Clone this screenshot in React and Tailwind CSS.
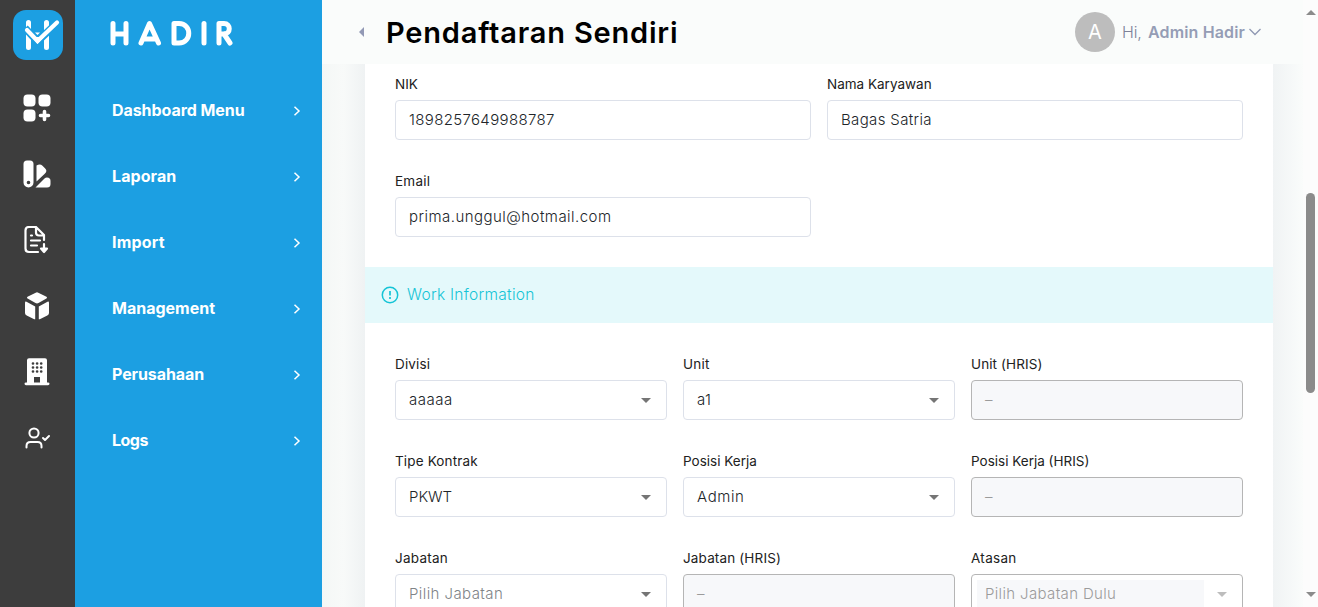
const menu = [
  ["Dashboard Menu", "tracking-[-0.06px]"],
  ["Laporan", "tracking-[0.08px]"],
  ["Import", "tracking-[0.2px]"],
  ["Management", "tracking-[0px]"],
  ["Perusahaan", "tracking-[-0.1px]"],
  ["Logs", "tracking-[-0.5px]"],
];

function Logo() {
  return (
    <svg width="50" height="50" viewBox="0 0 50 50">
      <rect width="50" height="50" rx="13" fill="#1c9fe2" />
      <path d="M15.500 12.500V37.500M33.500 12.500V37.500" fill="none" stroke="#fff" strokeWidth="5" strokeLinecap="round" />
      <path d="M13 26L18 31V34H13ZM36 26L31 31V34H36Z" fill="#fff" />
      <path d="M12 18L24.500 31.500L45 12" fill="none" stroke="#1c9fe2" strokeWidth="7.500" />
      <path d="M22 22.500H27L24.500 25Z" fill="#fff" />
      <path d="M14 20L24.500 31L44 12.500" fill="none" stroke="#fff" strokeWidth="4.200" strokeLinecap="round" />
      <path d="M19 27L24.500 34L31 27Z" fill="#fff" />
    </svg>
  );
}

function Wordmark() {
  return (
    <svg width="124" height="28" viewBox="0 0 124 28" fill="none" stroke="#fff" strokeWidth="5" strokeLinecap="round" strokeLinejoin="round">
      <path d="M3 3.500V23M16 3.500V23M3 14H16" />
      <path d="M31 23L39.500 3.500L48.500 23M35 19H45" />
      <path d="M64 3.500V23H69C82 23 82 3.500 69 3.500Z" />
      <path d="M94 3.500V23" />
      <path d="M109 23V3.500H114C121 3.500 121 14 114 14H110M114 14L120 23" />
    </svg>
  );
}

const icons = [
  <svg width="28" height="28" viewBox="0 0 28 28" fill="#fff">
    <rect x="0.500" y="0.500" width="12" height="12" rx="4" />
    <rect x="15.500" y="0.500" width="12" height="12" rx="4" />
    <rect x="0.500" y="15.500" width="12" height="12" rx="4" />
    <path d="M21.500 17.500V25.500M17.500 21.500H25.500" stroke="#fff" strokeWidth="3.600" strokeLinecap="round" />
  </svg>,
  <svg width="28" height="28" viewBox="0 0 28 28" fill="#fff">
    <path fillRule="evenodd" d="M4 .5H7Q10.500 .5 10.500 4V22.500A5 5 0 0 1 .5 22.500V4Q.5 .5 4 .5ZM5.500 20.700A1.800 1.800 0 1 0 5.500 24.300A1.800 1.800 0 1 0 5.500 20.700Z" />
    <path d="M13.500 5.500Q17 3.200 19.500 5.700L22 8.200Q25 11 21.500 14L13.500 21.500Z" />
    <path d="M12.500 27.500L21.500 18.500Q22.500 17.500 24 17.500Q27.500 17.500 27.500 21V24Q27.500 27.500 24 27.500Z" />
  </svg>,
  <svg width="28" height="28" viewBox="0 0 28 28" fill="none" stroke="#fff" strokeWidth="2.200" strokeLinecap="round" strokeLinejoin="round">
    <path d="M15 26H6Q2.500 26 2.500 22.500V4.500Q2.500 1 6 1H13L21 9V14M13 1.500V6.500Q13 9.500 16 9.500H20M8 9.500H9M8 14.500H17M8 19.500H14M21 18V25" />
    <path d="M18 22.500H24L21 26Z" fill="#fff" />
  </svg>,
  <svg width="28" height="28" viewBox="0 0 28 28" fill="#fff">
    <path d="M14 .3Q14.600 .3 15.300 .7L23 4.500Q25 5.700 23 6.700L15.500 11Q14 11.800 12.500 11L5 6.700Q3 5.700 5 4.500L12.700 .7Q13.400 .3 14 .3Z" />
    <path d="M3.500 9.700L12.200 14.500V27.300Q11.500 27.500 10.700 27L3.700 23.500Q2 22.700 2 21V11Q2 9 3.500 9.700Z" />
    <path d="M24.500 9.700L15.800 14.500V27.300Q16.500 27.500 17.300 27L24.300 23.500Q26 22.700 26 21V11Q26 9 24.500 9.700Z" />
  </svg>,
  <svg width="28" height="28" viewBox="0 0 28 28" fill="#fff">
    <path fillRule="evenodd" d="M6 .3H22Q24 .3 24 2.300V24.500H25Q26.500 24.500 26.500 25.800Q26.500 27.200 25 27.200H3Q1.500 27.200 1.500 25.800Q1.500 24.500 3 24.500H4V2.300Q4 .3 6 .3ZM11 19V24.500H17V19Z" />
    <path d="M10 5.500H18.500M10 9.500H18.500M10 13.500H18.500" stroke="#3d3d3d" strokeWidth="2.700" strokeLinecap="round" strokeDasharray="0 4.100" />
  </svg>,
  <svg width="28" height="28" viewBox="0 0 28 28" fill="none" stroke="#fff" strokeWidth="2" strokeLinecap="round" strokeLinejoin="round">
    <circle cx="11" cy="9" r="4.600" />
    <path d="M3.500 23.500V22Q3.500 18 7.500 18H14.500Q18.500 18 18.500 22V23.500M20 14L22 16L26 12" />
  </svg>,
];

function Caret({ color = "fill-[#757575]" }) {
  return (
    <svg width="10" height="5" viewBox="0 0 10 5" className={color}>
      <path d="M0 0H10L5 5Z" />
    </svg>
  );
}

function Field({ label, value, kind, ls = "", vs = "tracking-[0.35px]" }) {
  const box =
    kind === "disabled" ? "border-[#b5b5b5] bg-[#f7f8fa]" : kind === "locked" ? "border-[#b5b5b5] bg-white" : "border-[#dde1ea] bg-white";
  const text = kind === "disabled" || kind === "locked" ? "text-[#9b9b9b]" : kind === "placeholder" ? "text-[#808488]" : "text-[#212529]";
  return (
    <div className="flex h-[97px] flex-col">
      <div className="h-[26px] text-[13.500px] leading-[20px] whitespace-nowrap text-[#212121]">
        <span className={ls}>{label}</span>
      </div>
      <div className={`flex h-10 items-center justify-between rounded-[4px] border pr-[15px] ${box} ${kind === "locked" ? "pl-[5px]" : "pl-[13px]"}`}>
        <div className={`text-[15px] font-light whitespace-nowrap ${text} ${kind === "locked" ? "flex h-[28px] w-[227px] items-center bg-[#f7f8fa] pl-2" : ""}`}>
          <span className={vs}>{value}</span>
        </div>
        {(kind === "select" || kind === "placeholder") && <Caret />}
        {kind === "locked" && <Caret color="fill-[#bdbdbd]" />}
      </div>
    </div>
  );
}

export default function App() {
  return (
    <div className="flex h-[607px] w-[1318px] overflow-hidden bg-[#f8faf9] font-['Inter',sans-serif]">
      <nav className="flex w-[75px] shrink-0 flex-col items-center bg-[#3d3d3d] pt-[10px]">
        <Logo />
        <div className="mt-[33.500px] mr-px flex flex-col gap-[38px]">
          {icons.map((icon, i) => (
            <div key={i} className="size-7">{icon}</div>
          ))}
        </div>
      </nav>
      <aside className="w-[247px] shrink-0 bg-[#1c9fe2] pt-5">
        <div className="ml-[35px] h-[58px]"><Wordmark /></div>
        {menu.map(([name, sp]) => (
          <div key={name} className="flex h-[66px] items-center justify-between pr-[21px] pl-[37px] text-[16px] font-bold text-white">
            <span className={`pb-0.5 ${sp}`}>{name}</span>
            <svg width="8" height="10" viewBox="0 0 8 10" fill="none" stroke="#fff" strokeWidth="1.500"><path d="M1.500 .7L6 5L1.500 9.300" /></svg>
          </div>
        ))}
      </aside>
      <main className="flex min-w-0 flex-1 flex-col">
        <header className="flex h-16 shrink-0 items-center bg-[#fafcfb] pl-[37px]">
          <svg width="5" height="10" viewBox="0 0 5 10" fill="#9299b5"><path d="M5 0V10L0 5Z" /></svg>
          <h1 className="ml-[22px] pt-0.5 text-[29px] font-semibold whitespace-nowrap text-black"><span className="tracking-[0.8px]">Pendaftaran Sendiri</span></h1>
          <div className="ml-auto flex items-center pr-[42px] text-[16px] text-[#7e8299]">
            <div className="flex size-10 items-center justify-center rounded-full bg-[#bdbdbd] text-[20px] text-white">A</div>
            <span className="ml-[7px] w-[26px] whitespace-nowrap font-light tracking-[-0.2px]">Hi,</span>
            <span className="w-[98px] font-semibold whitespace-nowrap text-[#959db5] tracking-[0.15px]">Admin Hadir</span>
            <svg className="ml-[3px]" width="12" height="8" viewBox="0 0 12 8" fill="none" stroke="#8f98b2" strokeWidth="1.300"><path d="M.5 1L6 6.500L11.500 1" /></svg>
          </div>
        </header>
        <div className="flex h-[543px]">
          <div className="w-[43px] bg-linear-to-r from-[#f4f7f6] via-[#f8faf9] to-[#eff2f3]" />
          <section className="h-[543px] w-[908px] overflow-hidden bg-white">
            <div className="grid h-[203px] grid-cols-2 gap-x-4 px-[30px] pt-[10px]">
              <Field label="NIK" value="1898257649988787" />
              <Field label="Nama Karyawan" value="Bagas Satria" />
              <Field label="Email" ls="tracking-[0.25px]" value="prima.unggul@hotmail.com" vs="tracking-[0.46px]" />
            </div>
            <div className="flex h-14 items-center gap-2 bg-[#e4f9fb] pl-4 text-[15.500px] font-light text-[#14c4d6]">
              <svg width="18" height="18" viewBox="0 0 18 18" fill="none" stroke="currentColor" strokeWidth="1.500"><circle cx="9" cy="9" r="7.700" /><path d="M9 5V9.500M9 11V13" strokeWidth="1.700" /></svg>
              <span className="tracking-[0.27px]">Work Information</span>
            </div>
            <div className="grid grid-cols-3 gap-x-4 px-[30px] pt-[31px]">
              <Field label="Divisi" ls="tracking-[0.15px]" value="aaaaa" kind="select" vs="tracking-[0.5px]" />
              <Field label="Unit" ls="tracking-[0.2px]" value="a1" kind="select" />
              <Field label="Unit (HRIS)" ls="tracking-[0.1px]" value="–" kind="disabled" />
              <Field label="Tipe Kontrak" ls="tracking-[0.15px]" value="PKWT" kind="select" vs="tracking-[0px]" />
              <Field label="Posisi Kerja" value="Admin" kind="select" vs="tracking-[0.6px]" />
              <Field label="Posisi Kerja (HRIS)" value="–" kind="disabled" />
              <Field label="Jabatan" ls="tracking-[0.25px]" value="Pilih Jabatan" kind="placeholder" vs="tracking-[0.42px]" />
              <Field label="Jabatan (HRIS)" ls="tracking-[0.15px]" value="–" kind="disabled" />
              <Field label="Atasan" ls="tracking-[0.3px]" value="Pilih Jabatan Dulu" kind="locked" />
            </div>
          </section>
          <div className="w-[30px] bg-linear-to-r from-[#f0f3f4] to-[#fafcfb]" />
        </div>
      </main>
      <div className="flex w-[15px] shrink-0 flex-col items-center bg-[#fcfcfc] pt-[10px]">
        <svg width="10" height="5" viewBox="0 0 10 5" fill="#8b8b8b"><path d="M0 5L5 0L10 5Z" /></svg>
        <div className="mt-[178px] h-[200px] w-[9px] rounded-full bg-[#8b8b8b]" />
        <svg className="mt-[199px]" width="10" height="5" viewBox="0 0 10 5" fill="#8b8b8b"><path d="M0 0L5 5L10 0Z" /></svg>
      </div>
    </div>
  );
}
